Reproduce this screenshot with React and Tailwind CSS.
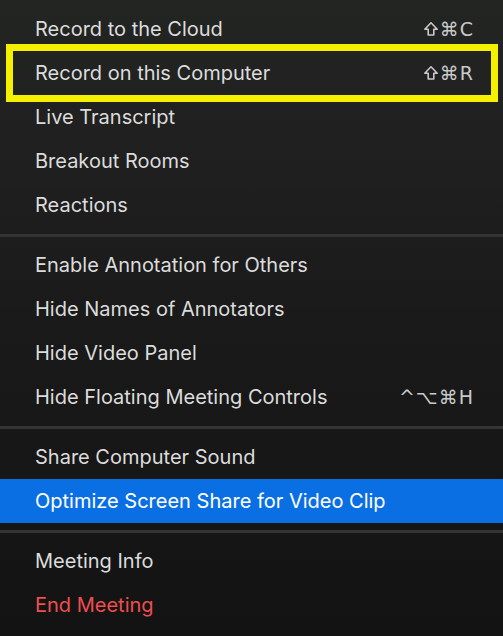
const groups = [
  [
    { label: "Record to the Cloud", keys: "⌘C", shift: true },
    { label: "Record on this Computer", keys: "⌘R", shift: true, boxed: true },
    { label: "Live Transcript" },
    { label: "Breakout Rooms" },
    { label: "Reactions" },
  ],
  [
    { label: "Enable Annotation for Others" },
    { label: "Hide Names of Annotators" },
    { label: "Hide Video Panel" },
    { label: "Hide Floating Meeting Controls", keys: "^⌥⌘H" },
  ],
  [
    { label: "Share Computer Sound" },
    { label: "Optimize Screen Share for Video Clip", active: true },
  ],
  [{ label: "Meeting Info" }, { label: "End Meeting", danger: true }],
];

function ShiftIcon() {
  return (
    <svg width="16" height="16" viewBox="0 0 16 16" className="mr-[1px]">
      <path
        d="M8 1.8 L14.2 8.2 H10.8 V14 H5.2 V8.2 H1.8 Z"
        fill="none"
        stroke="currentColor"
        strokeWidth="1.6"
        strokeLinejoin="round"
      />
    </svg>
  );
}

function MenuRow({ item }) {
  let rowClass = "relative flex items-center justify-between h-[44px] pl-[35px] pr-[29px]";
  if (item.active) rowClass += " bg-[#0b6fe4] text-white";
  else if (item.danger) rowClass += " text-[#ee4e4f]";
  else rowClass += " text-[#dcdcdc]";

  return (
    <div className={rowClass}>
      <span>{item.label}</span>
      {item.keys && (
        <span className="flex items-center font-['DejaVu_Sans',sans-serif] text-[19px] tracking-[1px] text-[#c9c9c9]">
          {item.shift && <ShiftIcon />}
          {item.keys}
        </span>
      )}
      {item.boxed && (
        <div className="absolute left-[6px] right-[5px] top-[-7px] bottom-[-7px] border-[7px] border-[#f5ef00]" />
      )}
    </div>
  );
}

export default function App() {
  return (
    <div className="w-[503px] h-[636px] overflow-hidden bg-gradient-to-b from-[#232523] via-[#1a1a1a] to-[#131313] pt-[7px] font-['Inter','Liberation_Sans',sans-serif] text-[20px]">
      {groups.map((group, gi) => (
        <div key={gi}>
          {gi > 0 && (
            <div className="h-[16px] flex items-center">
              <div className="w-full h-[3px] bg-[#343434]" />
            </div>
          )}
          {group.map((item) => (
            <MenuRow key={item.label} item={item} />
          ))}
        </div>
      ))}
    </div>
  );
}
